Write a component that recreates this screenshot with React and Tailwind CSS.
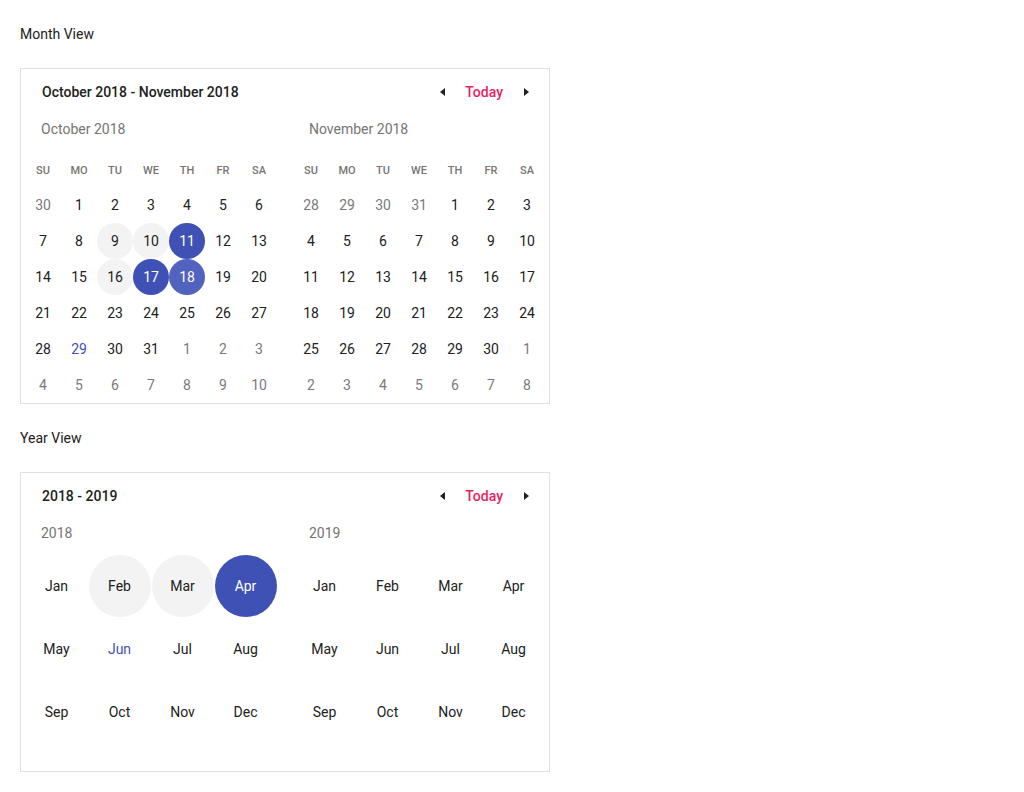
import React from "react";

const font = { fontFamily: "Roboto, 'Noto Sans', sans-serif" };

const ArrowLeft = () => (
  <svg width="5" height="8" viewBox="0 0 5 8">
    <path d="M5 0 L0 4 L5 8 Z" fill="#212121" />
  </svg>
);

const ArrowRight = () => (
  <svg width="5" height="8" viewBox="0 0 5 8">
    <path d="M0 0 L5 4 L0 8 Z" fill="#212121" />
  </svg>
);

const Header = ({ title }) => (
  <div className="flex h-[46px] items-center justify-between pl-[21px] pr-[11px]">
    <div className="text-sm font-medium text-[#212121]">{title}</div>
    <div className="flex items-center">
      <button className="flex h-6 w-6 items-center justify-center">
        <ArrowLeft />
      </button>
      <button className="px-[11px] text-sm font-medium text-[#e91e63]">
        Today
      </button>
      <button className="flex h-6 w-6 items-center justify-center">
        <ArrowRight />
      </button>
    </div>
  </div>
);

const weekdays = ["SU", "MO", "TU", "WE", "TH", "FR", "SA"];

// t: "o" outside, "s" selected, "s2" selected lighter, "h" hover gray, "n" today
const october = [
  [[30, "o"], [1], [2], [3], [4], [5], [6]],
  [[7], [8], [9, "h"], [10, "h"], [11, "s"], [12], [13]],
  [[14], [15], [16, "h"], [17, "s"], [18, "s2"], [19], [20]],
  [[21], [22], [23], [24], [25], [26], [27]],
  [[28], [29, "n"], [30], [31], [1, "o"], [2, "o"], [3, "o"]],
  [[4, "o"], [5, "o"], [6, "o"], [7, "o"], [8, "o"], [9, "o"], [10, "o"]],
];

const november = [
  [[28, "o"], [29, "o"], [30, "o"], [31, "o"], [1], [2], [3]],
  [[4], [5], [6], [7], [8], [9], [10]],
  [[11], [12], [13], [14], [15], [16], [17]],
  [[18], [19], [20], [21], [22], [23], [24]],
  [[25], [26], [27], [28], [29], [30], [1, "o"]],
  [[2, "o"], [3, "o"], [4, "o"], [5, "o"], [6, "o"], [7, "o"], [8, "o"]],
];

const cellClass = (t) => {
  if (t === "s") return "bg-[#3f51b5] text-white";
  if (t === "s2") return "bg-[#5262bf] text-white";
  if (t === "h") return "bg-[#f3f3f3] text-[#212121]";
  if (t === "n") return "text-[#3f51b5]";
  if (t === "o") return "text-[#7a7a7a]";
  return "text-[#212121]";
};

const MonthGrid = ({ title, weeks }) => (
  <div className="w-[252px]">
    <div className="flex h-[28px] items-center pl-4 text-sm text-[#757575]">
      {title}
    </div>
    <div className="mt-2 grid grid-cols-7">
      {weekdays.map((d) => (
        <div
          key={d}
          className="flex h-9 items-center justify-center pt-1 text-[11px] font-medium text-[#757575]"
        >
          {d}
        </div>
      ))}
      {weeks.flat().map(([n, t], i) => (
        <div key={i} className="flex h-9 items-center justify-center">
          <div
            className={`flex h-9 w-9 items-center justify-center rounded-full text-sm ${cellClass(t)}`}
          >
            {n}
          </div>
        </div>
      ))}
    </div>
  </div>
);

const months = [
  "Jan", "Feb", "Mar", "Apr", "May", "Jun",
  "Jul", "Aug", "Sep", "Oct", "Nov", "Dec",
];

const YearGrid = ({ year, marks }) => (
  <div className="w-[252px]">
    <div className="flex h-[28px] items-center pl-4 text-sm text-[#757575]">
      {year}
    </div>
    <div className="mt-[7px] grid grid-cols-4">
      {months.map((m) => (
        <div key={m} className="flex h-[63px] items-center justify-center">
          <div
            className={`flex h-[62px] w-[62px] items-center justify-center rounded-full text-sm ${cellClass(marks[m])}`}
          >
            {m}
          </div>
        </div>
      ))}
    </div>
  </div>
);

export default function App() {
  return (
    <div className="min-h-screen bg-white px-5 pt-6" style={font}>
      <div className="flex flex-col gap-6">
        <div className="h-5 text-sm leading-5 text-[#212121]">Month View</div>
        <div className="w-[530px] border border-[#e0e0e0]">
          <Header title="October 2018 - November 2018" />
          <div className="flex gap-4 px-1">
            <MonthGrid title="October 2018" weeks={october} />
            <MonthGrid title="November 2018" weeks={november} />
          </div>
        </div>
        <div className="h-5 text-sm leading-5 text-[#212121]">Year View</div>
        <div className="w-[530px] border border-[#e0e0e0] pb-[28px]">
          <Header title="2018 - 2019" />
          <div className="flex gap-4 px-1">
            <YearGrid
              year="2018"
              marks={{ Feb: "h", Mar: "h", Apr: "s", Jun: "n" }}
            />
            <YearGrid year="2019" marks={{}} />
          </div>
        </div>
      </div>
    </div>
  );
}
